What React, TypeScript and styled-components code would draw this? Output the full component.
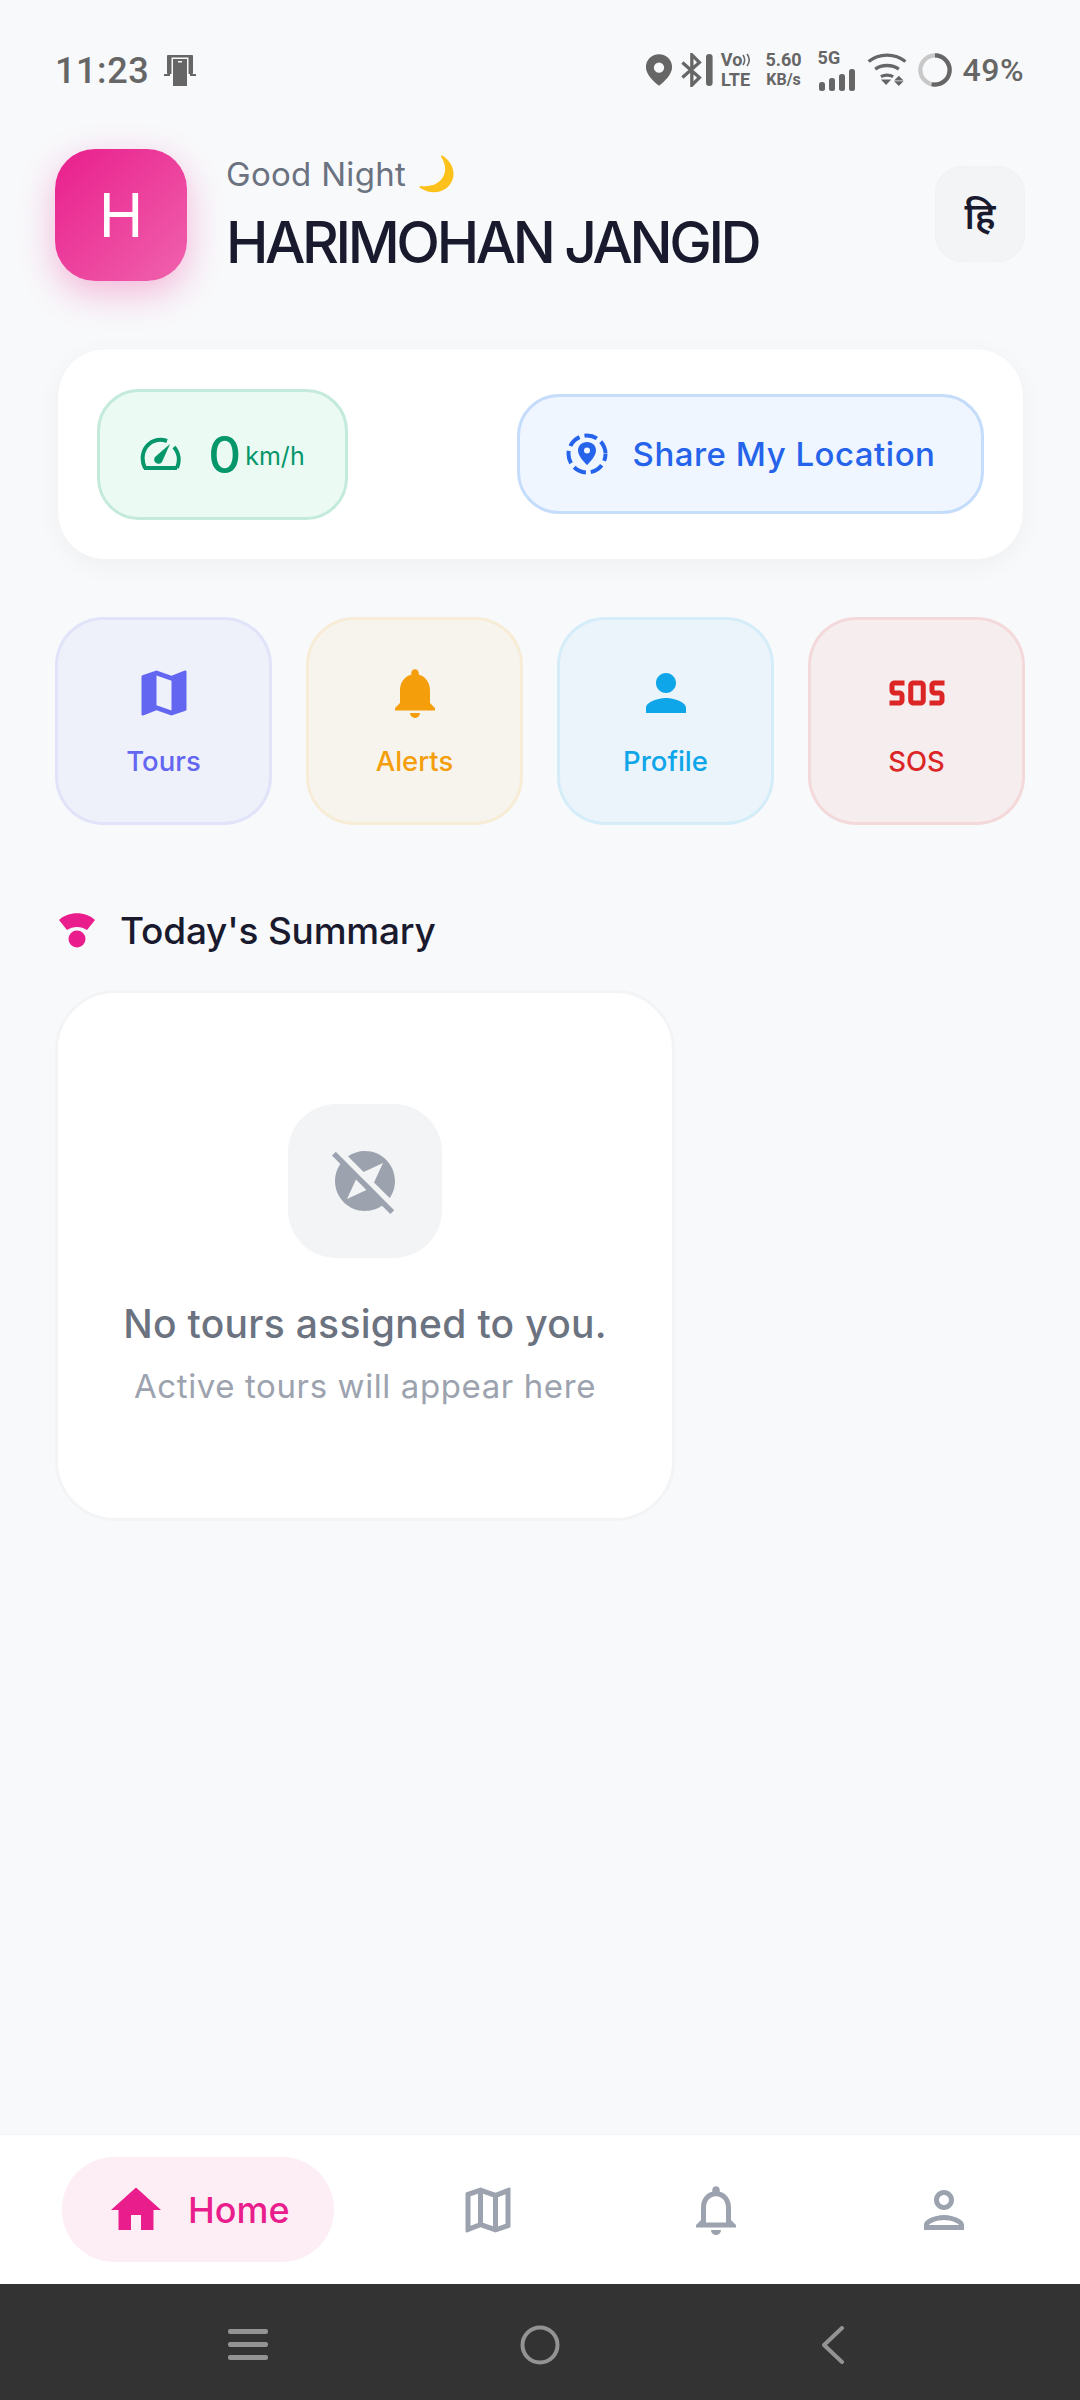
import * as React from 'react'
import styled, { createGlobalStyle } from 'styled-components'
import {
  MdExploreOff,
  MdHome,
  MdMap,
  MdNotifications,
  MdOutlineMap,
  MdOutlineNotifications,
  MdOutlinePerson,
  MdPerson,
  MdSos,
} from 'react-icons/md'

const GlobalStyle = createGlobalStyle`
  html, body {
    margin: 0;
    padding: 0;
    background: #f8f9fb;
  }
  * { box-sizing: border-box; }
`

const Page = styled.div`
  width: 1080px;
  height: 2400px;
  display: flex;
  flex-direction: column;
  background: #f8f9fb;
  font-family: Inter, "Noto Sans", sans-serif;
  overflow: hidden;
`

const StatusBar = styled.div`
  height: 141px;
  padding: 48px 56px 0 55px;
  display: flex;
  justify-content: space-between;
  align-items: flex-start;
  color: #666;
`

const StatusLeft = styled.div`
  display: flex;
  align-items: center;
  gap: 15px;
  height: 44px;
`

const Clock = styled.span`
  font-family: Roboto, sans-serif;
  font-size: 36px;
  font-weight: 500;
  letter-spacing: 0.6px;
  margin-top: 2px;
`

const StatusRight = styled.div`
  display: flex;
  align-items: center;
  height: 44px;
  color: #666;
`

const Battery = styled.span`
  font-family: Roboto, sans-serif;
  font-size: 32px;
  font-weight: 500;
  margin-left: 11px;
  letter-spacing: 0.5px;
`

const TinyStack = styled.div<{ $ml: number; $width: number; $left?: boolean }>`
  display: flex;
  flex-direction: column;
  align-items: ${(p) => (p.$left ? 'flex-start' : 'center')};
  width: ${(p) => p.$width}px;
  margin-left: ${(p) => p.$ml}px;
  font-family: Roboto, sans-serif;
  font-weight: 700;
  line-height: 20px;
`

const TinyTop = styled.span`
  font-size: 18px;
  white-space: nowrap;
  display: flex;
  align-items: center;
`

const TinyBottom = styled.span`
  font-size: 16px;
  white-space: nowrap;
`

const LteText = styled.span`
  font-size: 18px;
`

const StatusGlyph = styled.svg<{ $ml?: number }>`
  display: block;
  margin-left: ${(p) => p.$ml || 0}px;
  flex: none;
`

const Content = styled.div`
  flex: 1;
  padding: 0 55px;
  display: flex;
  flex-direction: column;
`

const Header = styled.div`
  display: flex;
  align-items: center;
  height: 148px;
`

const Avatar = styled.div`
  width: 132px;
  height: 132px;
  border-radius: 40px;
  background: linear-gradient(135deg, #e91e8c 0%, #f062ad 100%);
  box-shadow: 0 12px 36px rgba(233, 30, 140, 0.3);
  color: #fff;
  font-size: 60px;
  display: flex;
  align-items: center;
  justify-content: center;
  flex: none;
`

const Greeting = styled.div`
  margin-left: 39px;
  flex: 1;
`

const GoodNight = styled.div`
  display: flex;
  align-items: center;
  gap: 10px;
  font-size: 33px;
  line-height: 44px;
  color: #6b7280;
  letter-spacing: 0.3px;
`

const Name = styled.div`
  font-size: 57px;
  line-height: 72px;
  margin-top: 11px;
  font-weight: 500;
  color: #1a1a2e;
  letter-spacing: -3.4px;
  white-space: nowrap;
`

const LangButton = styled.div`
  width: 90px;
  height: 96px;
  border-radius: 27px;
  background: #f3f4f6;
  border: 1.5px solid #f1f2f5;
  display: flex;
  align-items: center;
  justify-content: center;
  font-size: 37px;
  font-weight: 600;
  color: #1a1a2e;
  margin-bottom: 2px;
`

const ActionCard = styled.div`
  margin: 59px 1px 0 2px;
  height: 212px;
  padding: 0 39px;
  background: #fff;
  border-radius: 48px;
  border: 1.5px solid #f3f4f6;
  box-shadow: 0 6px 24px rgba(0, 0, 0, 0.04);
  display: flex;
  align-items: center;
  justify-content: space-between;
`

const SpeedBox = styled.div`
  width: 251px;
  height: 131px;
  border-radius: 42px;
  background: #ebfbf4;
  border: 3px solid #c3eadb;
  color: #059669;
  display: flex;
  align-items: center;
  justify-content: center;
`

const SpeedValue = styled.span`
  font-size: 51px;
  font-weight: 500;
  margin-left: 27px;
`

const SpeedUnit = styled.span`
  font-size: 25px;
  font-weight: 400;
  margin-left: 4px;
  margin-top: 4px;
`

const ShareButton = styled.div`
  width: 467px;
  height: 120px;
  border-radius: 42px;
  background: #eff6ff;
  border: 3px solid #c5dcfb;
  color: #2563eb;
  display: flex;
  align-items: center;
  justify-content: center;
  gap: 25px;
  font-size: 33px;
  font-weight: 500;
  letter-spacing: 0.5px;
`

const Quick = styled.div`
  display: grid;
  grid-template-columns: repeat(4, 1fr);
  gap: 34px;
  margin-top: 57px;
`

const QuickItem = styled.div<{ $color: string }>`
  height: 208px;
  border-radius: 48px;
  background: ${(p) => p.$color}0e;
  border: 3px solid ${(p) => p.$color}1a;
  color: ${(p) => p.$color};
  display: flex;
  flex-direction: column;
  align-items: center;
  padding-top: 43px;
`

const QuickIcon = styled.div`
  height: 60px;
  display: flex;
  align-items: center;
  justify-content: center;
`

const QuickLabel = styled.div`
  margin-top: 20px;
  font-size: 27.5px;
  line-height: 36px;
  font-weight: 500;
`

const SectionTitle = styled.div`
  margin-top: 83px;
  height: 44px;
  display: flex;
  align-items: center;
  gap: 24px;
  font-size: 37px;
  font-weight: 500;
  color: #1a1a2e;
  letter-spacing: -0.2px;
  padding-left: 3px;
`

const EmptyCard = styled.div`
  margin-top: 38px;
  width: 620px;
  height: 531px;
  border-radius: 60px;
  background: #fff;
  border: 3px solid #f3f4f6;
  display: flex;
  flex-direction: column;
  align-items: center;
  padding-top: 111px;
`

const EmptyIcon = styled.div`
  width: 154px;
  height: 154px;
  border-radius: 48px;
  background: #f3f4f6;
  color: #9ca3af;
  display: flex;
  align-items: center;
  justify-content: center;
`

const EmptyTitle = styled.div`
  margin-top: 41px;
  font-size: 39px;
  line-height: 50px;
  font-weight: 500;
  color: #6b7280;
  letter-spacing: 0.3px;
`

const EmptySub = styled.div`
  margin-top: 15px;
  font-size: 33px;
  line-height: 44px;
  color: #9ca3af;
  letter-spacing: 0.6px;
`

const BottomTabs = styled.div`
  height: 150px;
  background: #fff;
  border-top: 1.5px solid #f3f4f6;
  display: grid;
  grid-template-columns: 396px 228px 228px 228px;
  padding-left: 62px;
  align-items: center;
`

const HomePill = styled.div`
  width: 272px;
  height: 105px;
  border-radius: 52px;
  background: #fdeef6;
  color: #e91e8c;
  display: flex;
  align-items: center;
  gap: 22px;
  padding-left: 44px;
  font-size: 36px;
  font-weight: 500;
`

const Tab = styled.div`
  color: #9ca3af;
  display: flex;
`

const SystemNav = styled.div`
  height: 116px;
  padding-top: 6px;
  background: #333;
  display: grid;
  grid-template-columns: repeat(3, 292px);
  justify-content: center;
  align-items: center;
  justify-items: center;
`

// little crescent, no emoji font on the box
const Moon = () => (
  <svg width="40" height="38" viewBox="0 0 40 38">
    <path
      d="M27 1c9 6 13 16 9 25-5 11-19 15-32 7-1-1 0-2 1-2 10 1 18-2 22-9 4-7 2-15-2-20 0-1 1-2 2-1z"
      fill="#fcc21b"
    />
  </svg>
)

const SpeedIcon = () => (
  <svg width="41" height="34" viewBox="0 0 41 34" fill="none">
    <path d="M5 31C1 23 2 13 9 7c5-4 12-5 18-3M34 10c5 6 6 14 3 21M4 31h33" stroke="#059669" strokeWidth="4" />
    <path d="M15 20L30 7l-8 18a4 4 0 0 1-7-5z" fill="#059669" />
  </svg>
)

const SectionIcon = () => (
  <svg width="38" height="36" viewBox="0 0 38 36" fill="#e91e8c">
    <path d="M1 8C10-1 28-1 37 8l-8 10c-6-4-14-4-20 0z" />
    <circle cx="19" cy="27" r="8.5" />
  </svg>
)

const ShareIcon = () => (
  <svg width="42" height="42" viewBox="0 0 42 42" fill="none">
    <circle cx="21" cy="21" r="18.5" stroke="#2563eb" strokeWidth="4" strokeDasharray="13 5" strokeDashoffset="6" />
    <path
      d="M21 9c-5.500 0-9 4-9 8.500 0 5.500 6.500 12 9 14.500 2.500-2.500 9-9 9-14.500C30 13 26.500 9 21 9z"
      fill="#2563eb"
    />
    <circle cx="21" cy="17.500" r="3" fill="#eff6ff" />
  </svg>
)

const PhoneCastIcon = () => (
  <svg width="32" height="31" viewBox="0 0 32 31" fill="#666">
    <rect x="3" y="0" width="26" height="19" rx="1" />
    <path d="M0 19h6v2H0zM26 19h6v2h-6z" />
    <rect x="7.500" y="2.500" width="17" height="29" fill="#f8f9fb" />
    <rect x="9" y="4" width="14" height="27" />
    <path d="M14 6h4v1.500h-4z" fill="#f8f9fb" />
  </svg>
)

const PinIcon = () => (
  <StatusGlyph width="28" height="34" viewBox="0 0 30 36" fill="#666">
    <path fillRule="evenodd" d="M15 1C7 1 1 7 1 15c0 8 9 16 14 20 5-4 14-12 14-20C29 7 23 1 15 1zm0 9a5.500 5.500 0 1 1 0 11 5.500 5.500 0 0 1 0-11z" />
  </StatusGlyph>
)

const BluetoothIcon = () => (
  <StatusGlyph $ml={8} width="33" height="34" viewBox="0 0 34 36" fill="none">
    <path d="M1 10l18 16-8 8V2l8 8L1 26" stroke="#666" strokeWidth="3.500" />
    <rect x="26" y="1" width="7" height="34" rx="3.500" fill="#666" />
  </StatusGlyph>
)

const VoLteIcon = () => (
  <TinyStack $ml={8} $width={28}>
    <TinyTop>
      Vo
      <svg width="8" height="14" viewBox="0 0 8 14" fill="none">
        <path d="M1 2c2 3 2 7 0 10M5 1c3 4 3 8 0 12" stroke="#666" strokeWidth="1.500" />
      </svg>
    </TinyTop>
    <LteText>LTE</LteText>
  </TinyStack>
)

const SignalIcon = () => (
  <TinyStack $ml={15} $width={40} $left>
    <TinyTop>5G</TinyTop>
    <svg width="38" height="24" viewBox="0 0 38 24" fill="#666">
      <rect x="1" y="14" width="6" height="9" rx="2.500" />
      <rect x="11" y="10" width="6" height="13" rx="2.500" />
      <rect x="21" y="6" width="6" height="17" rx="2.500" />
      <rect x="31" y="1" width="6" height="22" rx="2.500" />
    </svg>
  </TinyStack>
)

const WifiIcon = () => (
  <StatusGlyph $ml={9} width="41" height="34" viewBox="0 0 42 36" fill="none">
    <path d="M1 9c11-9 28-9 39 0M8 17c7-5 18-5 25 0M14 25c4-2 9-2 13 0" stroke="#666" strokeWidth="3.500" />
    <path d="M14 28h11l-5.500 6zM33 24l5 5h-10zM33 35l5-5h-10z" fill="#666" />
  </StatusGlyph>
)

const BatteryRing = () => (
  <StatusGlyph $ml={10} width="34" height="34" viewBox="0 0 36 36" fill="none">
    <circle cx="18" cy="18" r="15.500" stroke="#c8c8c8" strokeWidth="4.500" />
    <circle
      cx="18"
      cy="18"
      r="15.500"
      stroke="#666"
      strokeWidth="4.500"
      strokeDasharray="52 100"
      transform="rotate(-90 18 18)"
    />
  </StatusGlyph>
)

const quickItems = [
  { label: 'Tours', color: '#6366f1', icon: <MdMap size={60} /> },
  { label: 'Alerts', color: '#f59e0b', icon: <MdNotifications size={60} /> },
  { label: 'Profile', color: '#0ea5e9', icon: <MdPerson size={60} /> },
  { label: 'SOS', color: '#dc2626', icon: <MdSos size={60} /> },
]

export default function App() {
  return (
    <Page>
      <GlobalStyle />
      <StatusBar>
        <StatusLeft>
          <Clock>11:23</Clock>
          <PhoneCastIcon />
        </StatusLeft>
        <StatusRight>
          <PinIcon />
          <BluetoothIcon />
          <VoLteIcon />
          <TinyStack $ml={15} $width={38}>
            <TinyTop>5.60</TinyTop>
            <TinyBottom>KB/s</TinyBottom>
          </TinyStack>
          <SignalIcon />
          <WifiIcon />
          <BatteryRing />
          <Battery>49%</Battery>
        </StatusRight>
      </StatusBar>

      <Content>
        <Header>
          <Avatar>H</Avatar>
          <Greeting>
            <GoodNight>
              Good Night <Moon />
            </GoodNight>
            <Name>HARIMOHAN JANGID</Name>
          </Greeting>
          <LangButton>हि</LangButton>
        </Header>

        <ActionCard>
          <SpeedBox>
            <SpeedIcon />
            <SpeedValue>0</SpeedValue>
            <SpeedUnit>km/h</SpeedUnit>
          </SpeedBox>
          <ShareButton>
            <ShareIcon />
            Share My Location
          </ShareButton>
        </ActionCard>

        <Quick>
          {quickItems.map((item) => (
            <QuickItem key={item.label} $color={item.color}>
              <QuickIcon>{item.icon}</QuickIcon>
              <QuickLabel>{item.label}</QuickLabel>
            </QuickItem>
          ))}
        </Quick>

        <SectionTitle>
          <SectionIcon />
          Today's Summary
        </SectionTitle>

        <EmptyCard>
          <EmptyIcon>
            <MdExploreOff size={72} />
          </EmptyIcon>
          <EmptyTitle>No tours assigned to you.</EmptyTitle>
          <EmptySub>Active tours will appear here</EmptySub>
        </EmptyCard>
      </Content>

      <BottomTabs>
        <HomePill>
          <MdHome size={60} />
          Home
        </HomePill>
        <Tab><MdOutlineMap size={60} /></Tab>
        <Tab><MdOutlineNotifications size={60} /></Tab>
        <Tab><MdOutlinePerson size={60} /></Tab>
      </BottomTabs>

      <SystemNav>
        <svg width="42" height="34" viewBox="0 0 42 34" fill="#939393">
          <rect x="1" y="1" width="40" height="5" rx="2" />
          <rect x="1" y="14" width="40" height="5" rx="2" />
          <rect x="1" y="27" width="40" height="5" rx="2" />
        </svg>
        <svg width="40" height="40" viewBox="0 0 40 40" fill="none">
          <circle cx="20" cy="20" r="17.500" stroke="#939393" strokeWidth="4" />
        </svg>
        <svg width="28" height="38" viewBox="0 0 28 38" fill="none">
          <path d="M24 2L6 19l18 17" stroke="#939393" strokeWidth="4" strokeLinecap="round" strokeLinejoin="round" />
        </svg>
      </SystemNav>
    </Page>
  )
}
